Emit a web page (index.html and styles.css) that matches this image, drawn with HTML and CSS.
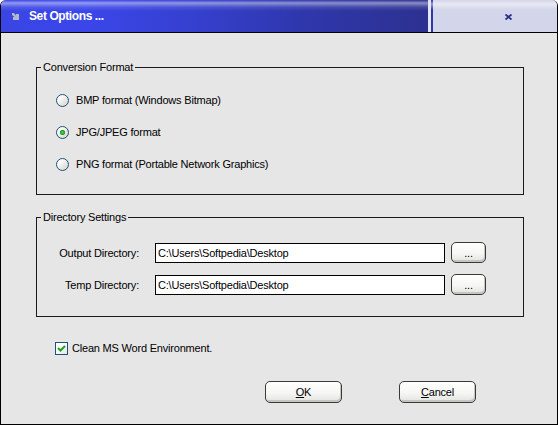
FILE: index.html
```html
<!DOCTYPE html>
<html lang="en">

<head>
    <meta charset="UTF-8">
    <meta name="viewport" content="width=device-width, initial-scale=1.0">
    <title>Set Options ...</title>
    <link rel="stylesheet" href="styles.css">
</head>

<body>

    <div class="window">
        <div class="titlebar">
            <div class="caption">
                <svg class="app-icon" width="7" height="7" viewBox="0 0 7 7">
                    <path d="M0 0 L2 0 L4 2.5 L4 1 L7 1 L7 7 L1 7 L1 4 L2.5 4 L0 2 Z" fill="#b4b6c8" />
                </svg>
                <span class="title">Set Options ...</span>
            </div>
            <div class="caption-end">
                <svg class="close" width="7" height="6" viewBox="0 0 7 6">
                    <path d="M0.5 0.5 L6.5 5.5 M6.5 0.5 L0.5 5.5" stroke="#2b2f8a" stroke-width="1.8" />
                </svg>
            </div>
        </div>

        <div class="content">
            <fieldset class="group group-format">
                <legend>Conversion Format</legend>
                <div class="options">
                    <label class="option">
                        <input type="radio" name="format" value="bmp">
                        <span>BMP format (Windows Bitmap)</span>
                    </label>
                    <label class="option">
                        <input type="radio" name="format" value="jpg" checked>
                        <span>JPG/JPEG format</span>
                    </label>
                    <label class="option">
                        <input type="radio" name="format" value="png">
                        <span>PNG format (Portable Network Graphics)</span>
                    </label>
                </div>
            </fieldset>

            <fieldset class="group group-dirs">
                <legend>Directory Settings</legend>
                <div class="dir-grid">
                    <span class="dir-label">Output Directory:</span>
                    <input class="dir-input" type="text" value="C:\Users\Softpedia\Desktop">
                    <button class="btn btn-browse">...</button>

                    <span class="dir-label">Temp Directory:</span>
                    <input class="dir-input" type="text" value="C:\Users\Softpedia\Desktop">
                    <button class="btn btn-browse">...</button>
                </div>
            </fieldset>

            <label class="check-row">
                <input type="checkbox" checked>
                <span>Clean MS Word Environment.</span>
            </label>

            <div class="actions">
                <button class="btn btn-action"><u>O</u>K</button>
                <button class="btn btn-action"><u>C</u>ancel</button>
            </div>
        </div>
    </div>

</body>

</html>
```

FILE: styles.css
```css
body {
    margin: 0;
    background-color: #ffffff;
    font-family: 'Liberation Sans', Arial, sans-serif;
    font-size: 11px;
    letter-spacing: -0.2px;
    color: #000;
}

.window {
    width: 558px;
    height: 425px;
    box-sizing: border-box;
    background-color: #e6e6e6;
    border: 1px solid #000;
    border-top: none;
    border-radius: 6px 6px 0 0;
    overflow: hidden;
}

/* Title bar */
.titlebar {
    display: flex;
    height: 32px;
    border-bottom: 1px solid #000;
}

.caption {
    flex: 1;
    display: flex;
    align-items: center;
    padding-left: 11px;
    background:
        linear-gradient(to bottom, rgba(255, 255, 255, 0) 0, rgba(255, 255, 255, 0.45) 3px, rgba(255, 255, 255, 0.12) 7px, rgba(255, 255, 255, 0) 11px),
        linear-gradient(to right, #3a45e4 0%, #3b46ea 20%, #3540cf 45%, #2f37ad 70%, #2c3190 100%);
}

.app-icon {
    margin-right: 10px;
    margin-top: 1px;
}

.title {
    color: #ffffff;
    font-family: 'Liberation Sans', Arial, sans-serif;
    font-weight: bold;
    font-size: 12px;
    letter-spacing: -0.4px;
}

.caption-end {
    width: 126px;
    display: flex;
    align-items: center;
    border-left: 3px solid #e4e5f6;
    background:
        linear-gradient(to bottom, rgba(255, 255, 255, 0) 0, rgba(255, 255, 255, 0.5) 4px, rgba(255, 255, 255, 0) 10px),
        linear-gradient(to right, #2f36a6 0, #2f36a6 2px, #d3d5ea 2px);
}

.close {
    margin-left: 74px;
    margin-top: 1px;
}

/* Dialog body */
.content {
    padding: 28px 33px 0 35px;
}

.group {
    margin: 0;
    padding: 0 0 0 4px;
    border: 1px solid #1a1a1a;
}

.group legend {
    padding: 0 2px;
    line-height: 13px;
}

.group-format {
    height: 134px;
    box-sizing: border-box;
}

.options {
    display: flex;
    flex-direction: column;
    gap: 16px;
    margin: 18px 0 0 15px;
}

.option {
    display: flex;
    align-items: center;
    gap: 7px;
    height: 16px;
}

.option input {
    appearance: none;
    margin: 0;
    width: 13px;
    height: 13px;
    border: 1px solid #1c5180;
    border-radius: 50%;
    box-sizing: border-box;
    background: linear-gradient(135deg, #ffffff 20%, #e0e0d8 75%, #c8c8c0 100%);
}

.option input:checked {
    background:
        radial-gradient(circle at 50% 50%, #5ad25a 0, #21a121 2.2px, transparent 3px),
        linear-gradient(135deg, #ffffff 20%, #e0e0d8 75%, #c8c8c0 100%);
}

.group-dirs {
    margin-top: 16px;
    height: 106px;
    box-sizing: border-box;
}

.dir-grid {
    display: grid;
    grid-template-columns: 98px 290px 35px;
    column-gap: 16px;
    row-gap: 11px;
    align-items: center;
    margin-top: 18px;
}

.dir-grid .btn-browse {
    margin-left: -10px;
}

.dir-label {
    text-align: right;
}

.dir-input {
    box-sizing: border-box;
    height: 20px;
    margin: 0;
    padding: 0 2px;
    border: 1px solid #000;
    background-color: #fff;
    font-family: inherit;
    font-size: 11px;
    letter-spacing: -0.2px;
    color: #000;
    outline: none;
}

.btn {
    box-sizing: border-box;
    margin: 0;
    padding: 0;
    border: 1px solid #3a3a3a;
    border-radius: 5px;
    background: linear-gradient(to bottom, #ffffff 0%, #f6f6f4 55%, #e2e2de 100%);
    box-shadow: inset -1px -2px 0 #c6c6c0;
    font-family: inherit;
    font-size: 11px;
    letter-spacing: -0.2px;
    color: #000;
    cursor: pointer;
}

.btn-browse {
    width: 35px;
    height: 21px;
}

.check-row {
    display: flex;
    align-items: center;
    gap: 4px;
    margin: 24px 0 0 19px;
    height: 14px;
}

.check-row input {
    appearance: none;
    margin: 0;
    width: 13px;
    height: 13px;
    box-sizing: border-box;
    border: 1px solid #1c5180;
    background: linear-gradient(135deg, #ffffff 30%, #e6e6de 100%);
}

.check-row input:checked {
    background:
        url("data:image/svg+xml,%3Csvg xmlns='http://www.w3.org/2000/svg' width='11' height='11'%3E%3Cpath d='M2 5 L4.5 7.5 L9 3' stroke='%2321a121' stroke-width='2' fill='none'/%3E%3C/svg%3E") center no-repeat,
        linear-gradient(135deg, #ffffff 30%, #e6e6de 100%);
}

.actions {
    display: flex;
    justify-content: flex-end;
    gap: 57px;
    margin-top: 26px;
    padding-right: 48px;
}

.btn-action {
    width: 77px;
    height: 22px;
}
```
